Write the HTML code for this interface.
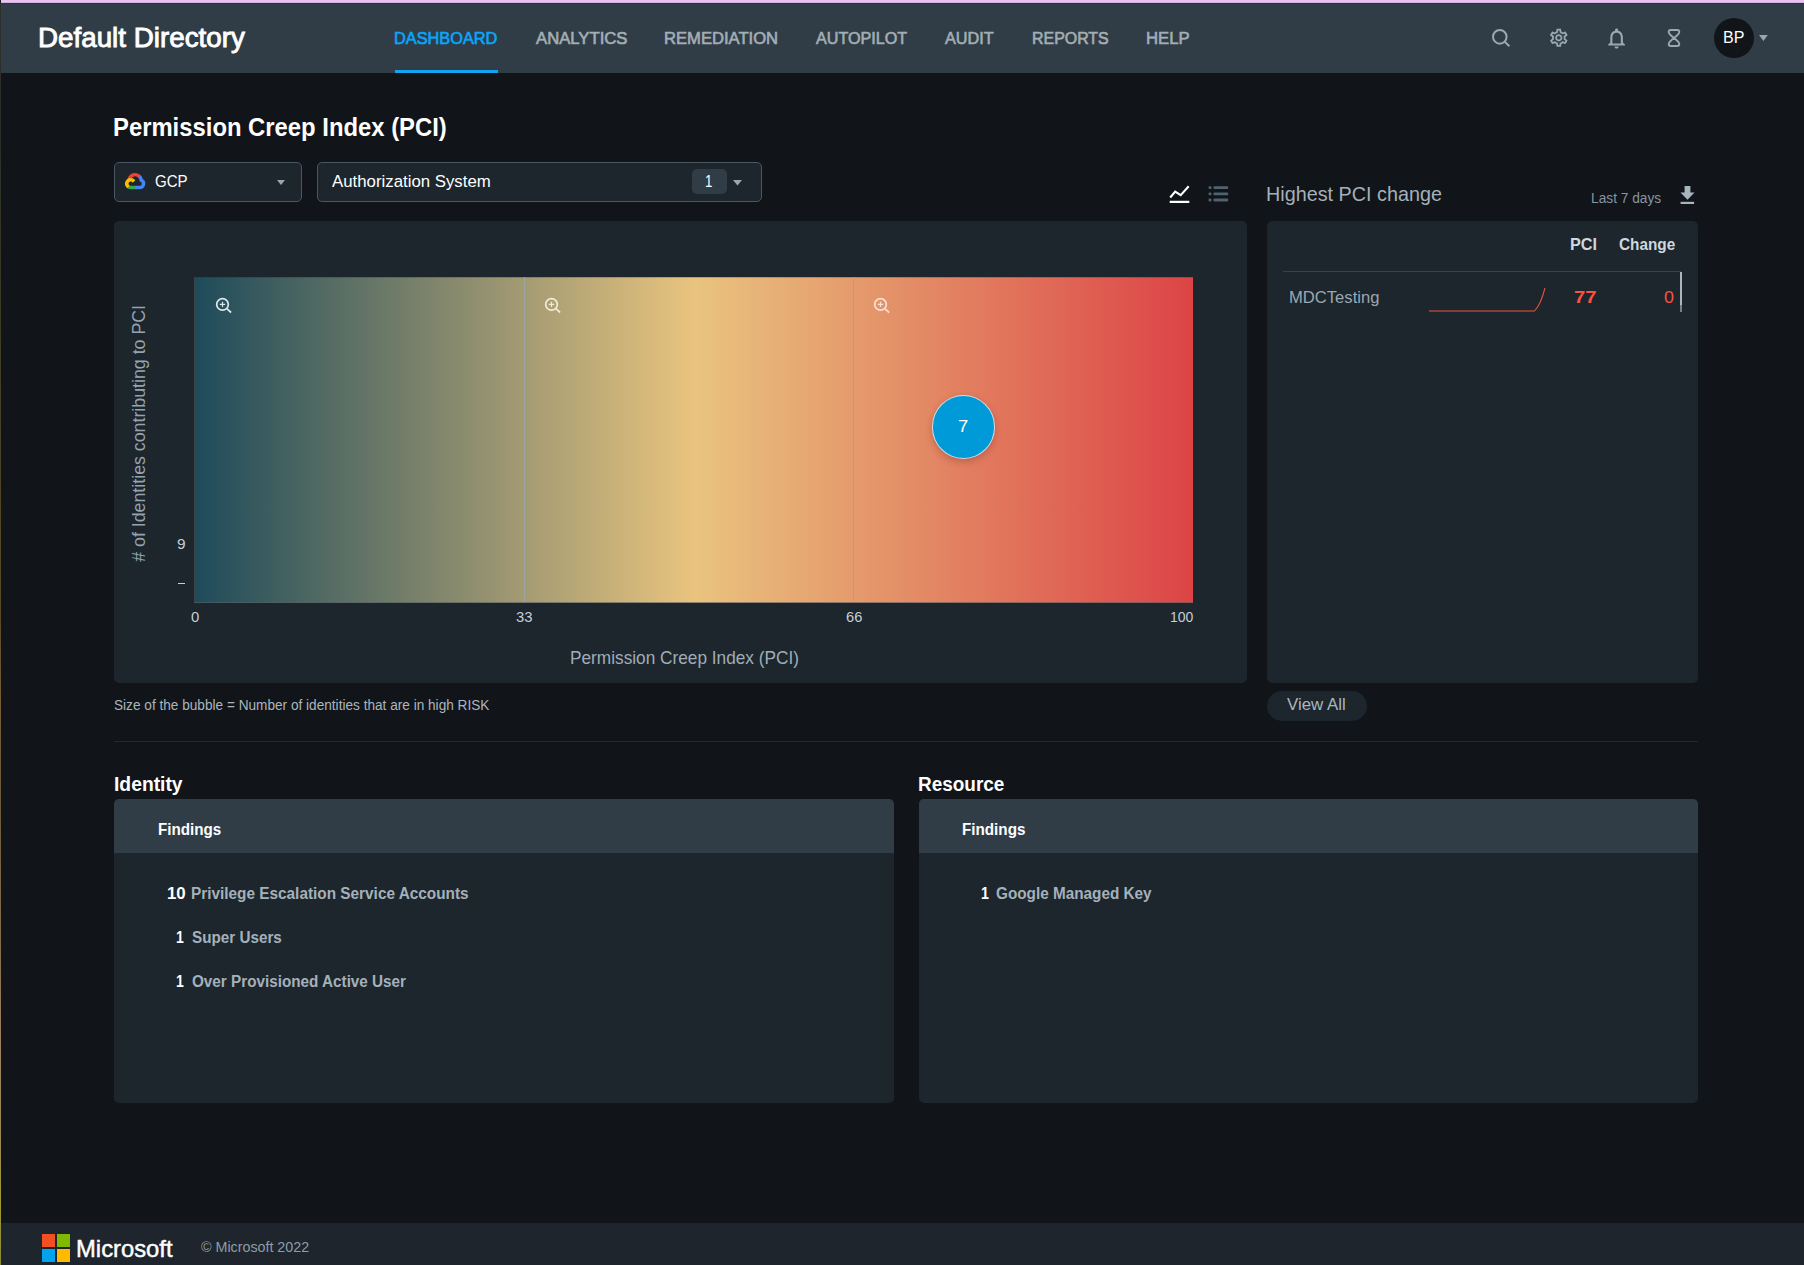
<!DOCTYPE html>
<html lang="en"><head><meta charset="utf-8"><title>Default Directory - Dashboard</title>
<style>
html,body{margin:0;padding:0}
body{width:1804px;height:1265px;overflow:hidden;position:relative;background:#111418;font-family:"Liberation Sans",sans-serif;}
.a{position:absolute;box-sizing:border-box}
.t{margin:0;padding:0;border:0;background:none;font-weight:400;font-style:normal;text-decoration:none;position:absolute;white-space:nowrap;line-height:1;transform-origin:0 0;font-family:"Liberation Sans",sans-serif;display:block}
.panel{background:#1d252d;border-radius:5px}
.sel{background:#1d252d;border:1px solid #485863;border-radius:5px}
.hdr{background:#303d47}
svg{position:absolute;overflow:visible}

</style></head>
<body>
<!-- window edge artefacts -->
<div class="a" style="left:0;top:0;width:1px;height:1265px;background:linear-gradient(#1a1c18 0,#1a1c18 3px,#302e2c 3px,#2c2d28 120px,#3a3a24 300px,#4a4424 450px,#5a4a28 620px,#7a5c34 700px,#6a5a3c 800px,#8a6c50 950px,#a08060 1050px,#9a8a4c 1150px,#a09a30 1200px,#8a8a34 1265px)"></div>
<div class="a" style="left:1px;top:0;width:1803px;height:3px;background:linear-gradient(#e9c4f0 0,#e9c4f0 2px,#d3b0db 2px,#d3b0db 3px)"></div>

<!-- header -->
<div class="a hdr" style="left:1px;top:3px;width:1803px;height:70px;border-top:1px solid #28363f"></div>
<div class="a" style="left:395px;top:70px;width:103px;height:3px;background:#10a4f5"></div>

<!-- header icons -->
<svg style="left:1486px;top:24px" width="30" height="28" viewBox="0 0 30 28" fill="none" stroke="#9aa8b1" stroke-width="2"><circle cx="13.8" cy="12.85" r="6.8"/><path d="M18.5 17.55L23.4 22.3"/></svg>
<svg style="left:1548.2px;top:27.2px" width="21.6" height="21.6" viewBox="0 0 24 24" fill="#9aa8b1"><path d="M19.43 12.980c.040-.320.070-.640.070-.980 0-.340-.030-.660-.070-.980l2.110-1.650c.190-.150.240-.420.120-.640l-2-3.460c-.090-.160-.260-.250-.440-.250-.060 0-.120.010-.170.030l-2.490 1c-.520-.400-1.080-.730-1.690-.980l-.380-2.650C14.460 2.180 14.250 2 14 2h-4c-.250 0-.460.180-.490.420l-.380 2.650c-.610.250-1.170.590-1.690.980l-2.490-1c-.060-.020-.120-.030-.180-.030-.170 0-.340.090-.430.250l-2 3.460c-.130.220-.070.490.120.640l2.110 1.650c-.040.320-.070.650-.070.980 0 .330.030.660.070.980l-2.110 1.650c-.190.150-.240.420-.120.640l2 3.460c.090.160.260.250.440.250.060 0 .120-.010.170-.030l2.490-1c.520.400 1.080.730 1.690.980l.380 2.650c.030.240.240.420.490.420h4c.250 0 .460-.180.490-.420l.380-2.650c.610-.250 1.170-.590 1.690-.980l2.490 1c.060.020.120.030.180.030.170 0 .340-.090.430-.250l2-3.460c.120-.220.070-.490-.120-.640l-2.110-1.650zm-1.980-1.710c.040.310.050.520.050.730 0 .210-.020.430-.050.730l-.140 1.130.890.700 1.080.840-.700 1.210-1.270-.510-1.040-.420-.900.680c-.430.320-.840.560-1.250.730l-1.060.430-.160 1.130-.200 1.350h-1.400l-.190-1.350-.160-1.130-1.060-.430c-.430-.180-.830-.410-1.230-.710l-.910-.700-1.060.430-1.270.510-.700-1.210 1.080-.840.890-.700-.140-1.130c-.030-.310-.050-.540-.050-.740s.020-.430.050-.730l.140-1.130-.890-.700-1.080-.840.700-1.210 1.270.510 1.040.420.900-.680c.430-.320.840-.560 1.250-.730l1.060-.430.160-1.130.200-1.350h1.390l.190 1.350.160 1.130 1.060.430c.430.180.830.410 1.230.710l.910.700 1.060-.430 1.270-.510.700 1.210-1.070.850-.890.700.140 1.130zM12 8c-2.210 0-4 1.790-4 4s1.790 4 4 4 4-1.790 4-4-1.790-4-4-4zm0 6c-1.100 0-2-.900-2-2s.900-2 2-2 2 .900 2 2-.900 2-2 2z"/></svg>
<svg style="left:1603.9px;top:26.2px" width="25.2" height="24.600" viewBox="0 0 24 24" fill="#9aa8b1" preserveAspectRatio="none"><path d="M12 22c1.100 0 2-.900 2-2h-4c0 1.100.900 2 2 2zm6-6v-5c0-3.070-1.630-5.640-4.500-6.320V4c0-.830-.670-1.500-1.500-1.500s-1.500.670-1.500 1.500v.680C7.640 5.360 6 7.920 6 11v5l-2 2v1h16v-1l-2-2zm-2 1H8v-6c0-2.480 1.510-4.500 4-4.500s4 2.020 4 4.500v6z"/></svg>
<svg style="left:1664px;top:28px" width="20" height="20" viewBox="-10 -10 20 20" fill="none" stroke="#9aa8b1" stroke-width="1.900"><path d="M-3.300-8H3.300Q5.300-8 5.300-6C5.300-1.900-5.300 1.900-5.300 6Q-5.300 8-3.300 8H3.300Q5.300 8 5.300 6C5.300 1.900-5.300-1.900-5.300-6Q-5.300-8-3.300-8Z"/></svg>
<div class="a" style="left:1714px;top:18px;width:40px;height:40px;border-radius:50%;background:#11151a"></div>
<svg style="left:1759.400px;top:35.100px" width="8.800" height="6" viewBox="0 0 9 6"><path d="M0 0h9L4.500 6z" fill="#98a6af"/></svg>

<!-- selectors -->
<div class="a sel" style="left:114px;top:162px;width:188px;height:40px"></div>
<svg style="left:125px;top:172.700px" width="20.300" height="16.400" viewBox="0 0 41 33">
  <path d="M26 9.100l1.300.020 3.600-3.600.170-1.500A16.100 16.100 0 0 0 4.800 11.900c.390-.270 1.230-.070 1.230-.070l7.100-1.170s.370-.600.550-.570A8.900 8.900 0 0 1 26 9.100z" fill="#ea4335"/>
  <path d="M36 11.900a16.100 16.100 0 0 0-4.850-7.800l-5 5a8.900 8.900 0 0 1 3.260 7v.890a4.450 4.450 0 1 1 0 8.900h-8.900l-.890.900v5.340l.890.890h8.900A11.570 11.570 0 0 0 36 11.900z" fill="#4285f4"/>
  <path d="M11.600 33h8.900v-7.120h-8.900a4.400 4.400 0 0 1-1.830-.400l-1.250.390-3.590 3.580-.310 1.250A11.510 11.510 0 0 0 11.600 33z" fill="#34a853"/>
  <path d="M11.600 9.900A11.570 11.570 0 0 0 4.620 30.700l5.160-5.160a4.450 4.450 0 1 1 5.890-5.890l5.160-5.160A11.560 11.560 0 0 0 11.600 9.900z" fill="#fbbc05"/>
</svg>
<svg style="left:277.200px;top:180px" width="8" height="5" viewBox="0 0 8 5"><path d="M0 0h8L4 5z" fill="#98a6af"/></svg>
<div class="a sel" style="left:317px;top:162px;width:445px;height:40px"></div>
<div class="a" style="left:692px;top:169px;width:35px;height:25px;border-radius:5px;background:#303d47"></div>
<svg style="left:732.500px;top:180px" width="9" height="5.500" viewBox="0 0 9 5.500"><path d="M0 0h9L4.500 5.500z" fill="#98a6af"/></svg>

<!-- chart-type toggles -->
<svg style="left:1168px;top:183px" width="24" height="22" viewBox="0 0 24 22" fill="none" stroke="#ffffff" stroke-width="2.100"><path d="M2.200 14.500L7.200 8.600 12.700 12.100 20.700 3.300" stroke-linejoin="miter"/><path d="M1.700 18.900h19.600" stroke-width="2.250"/></svg>
<svg style="left:1208px;top:185px" width="21" height="17" viewBox="0 0 21 17" fill="#4f6270"><rect x="0.500" y="1.200" width="3" height="2.800" rx="1"/><rect x="5.500" y="1.200" width="14.700" height="2.800" rx=".8"/><rect x="0.500" y="7.400" width="3" height="2.800" rx="1"/><rect x="5.500" y="7.400" width="14.700" height="2.800" rx=".8"/><rect x="0.500" y="13.600" width="3" height="2.800" rx="1"/><rect x="5.500" y="13.600" width="14.700" height="2.800" rx=".8"/></svg>

<!-- chart panel -->
<div class="a panel" style="left:114px;top:221px;width:1133px;height:462px"></div>
<div class="a" style="left:195px;top:277px;width:998px;height:326px;background:linear-gradient(90deg,#1e4b5a 0%,#e9c47f 50%,#dc4446 100%)"></div>
<div class="a" style="left:194px;top:277px;width:1px;height:326px;background:#3b4549"></div>
<div class="a" style="left:194px;top:602px;width:999px;height:1px;background:rgba(88,96,98,.62)"></div>
<div class="a" style="left:195px;top:277px;width:998px;height:1px;background:rgba(29,37,45,.22)"></div>
<div class="a" style="left:524px;top:277px;width:1px;height:325px;background:#99a4a9"></div>
<div class="a" style="left:853px;top:277px;width:1px;height:325px;background:#9ba5ab"></div>
<div class="a" style="left:178px;top:583px;width:7px;height:1.400px;background:#c5d0d8"></div>
<svg style="left:214px;top:296px" width="20" height="20" viewBox="0 0 20 20" fill="none" stroke="#dce8ee" stroke-width="1.700"><circle cx="8.500" cy="8.400" r="5.800"/><path d="M12.800 12.700L17.100 16.500" stroke-linecap="butt"/><path d="M8.500 5.700v5.400M5.800 8.400h5.400" stroke-width="1.200"/></svg>
<svg style="left:543px;top:296px" width="20" height="20" viewBox="0 0 20 20" fill="none" stroke="#f3ead8" stroke-width="1.700"><circle cx="8.500" cy="8.400" r="5.800"/><path d="M12.800 12.700L17.100 16.500" stroke-linecap="butt"/><path d="M8.500 5.700v5.400M5.800 8.400h5.400" stroke-width="1.200"/></svg>
<svg style="left:872px;top:296px" width="20" height="20" viewBox="0 0 20 20" fill="none" stroke="#f6e3d6" stroke-width="1.700"><circle cx="8.500" cy="8.400" r="5.800"/><path d="M12.800 12.700L17.100 16.500" stroke-linecap="butt"/><path d="M8.500 5.700v5.400M5.800 8.400h5.400" stroke-width="1.200"/></svg>
<div class="a" style="left:931.500px;top:395px;width:63.500px;height:63.500px;border-radius:50%;background:#009ad9;border:1px solid rgba(228,228,228,.9);box-shadow:0 3px 7px rgba(90,30,20,.28)"></div>
<span class="t" id="ylab" style="left:0;top:0;font-size:18.300px;color:#94a3ad;transform-origin:0 0;transform:translate(129.800px,561.800px) rotate(-90deg) scaleX(0.972)"># of Identities contributing to PCI</span>

<!-- right panel -->
<svg style="left:1680px;top:185px" width="15" height="20" viewBox="0 0 15 20" fill="#a8b5bd"><path d="M4.600 1h5.800v6.600h4.100L7.500 14.700.500 7.600h4.100z"/><rect x=".600" y="16.800" width="13.500" height="2.200"/></svg>
<div class="a panel" style="left:1267px;top:221px;width:431px;height:462px"></div>
<div class="a" style="left:1283px;top:271px;width:397.500px;height:1px;background:#34444f"></div>
<div class="a" style="left:1680.300px;top:272px;width:1.700px;height:40px;background:linear-gradient(#aab5bd 0,#aab5bd 33px,#75828b 33px,#75828b 40px)"></div>
<svg style="left:1420px;top:280px" width="140" height="40" viewBox="0 0 140 40" fill="none" stroke="#f0523f" stroke-width="1.100"><path d="M9 31H114.500Q121 24 125 7.800"/></svg>
<div class="a" style="left:1267px;top:691px;width:100px;height:30px;border-radius:15px;background:#1d252d"></div>
<div class="a" style="left:114px;top:741px;width:1584px;height:1px;background:#222a31"></div>

<!-- cards -->
<div class="a" style="left:114px;top:799px;width:780px;height:303.500px;border-radius:5px;background:#1d252d;overflow:hidden"><div class="hdr" style="height:53.600px"></div></div>
<div class="a" style="left:919px;top:799px;width:779px;height:303.500px;border-radius:5px;background:#1d252d;overflow:hidden"><div class="hdr" style="height:53.600px"></div></div>

<!-- footer -->
<div class="a" style="left:1px;top:1222.800px;width:1803px;height:43px;background:#1e252d"></div>
<div class="a" style="left:41.600px;top:1234.200px;width:13.300px;height:13.300px;background:#f25022"></div>
<div class="a" style="left:56.500px;top:1234.200px;width:13.400px;height:13.300px;background:#7fba00"></div>
<div class="a" style="left:41.600px;top:1248.800px;width:13.300px;height:13.200px;background:#00a4ef"></div>
<div class="a" style="left:56.500px;top:1248.800px;width:13.400px;height:13.200px;background:#ffb900"></div>

<!-- text layer -->
<header class="site-header">
  <div class="t" id="t_dd" style="left:38px;top:24px;font-size:28.02px;color:#ffffff;-webkit-text-stroke:0.9px #ffffff;transform:scaleX(0.9915);">Default Directory</div>
</header>
<nav class="main-nav">
  <a class="t" id="t_n1" style="left:394px;top:30px;font-size:17.35px;color:#0aa6fa;-webkit-text-stroke:0.65px #0aa6fa;transform:scaleX(0.9413);">DASHBOARD</a>
  <a class="t" id="t_n2" style="left:536px;top:30px;font-size:17.35px;color:#a3aeb4;-webkit-text-stroke:0.65px #a3aeb4;transform:scaleX(0.9619);">ANALYTICS</a>
  <a class="t" id="t_n3" style="left:664px;top:30px;font-size:17.35px;color:#a3aeb4;-webkit-text-stroke:0.65px #a3aeb4;transform:scaleX(0.9576);">REMEDIATION</a>
  <a class="t" id="t_n4" style="left:816px;top:30px;font-size:17.35px;color:#a3aeb4;-webkit-text-stroke:0.65px #a3aeb4;transform:scaleX(0.9309);">AUTOPILOT</a>
  <a class="t" id="t_n5" style="left:945px;top:30px;font-size:17.35px;color:#a3aeb4;-webkit-text-stroke:0.65px #a3aeb4;transform:scaleX(0.9370);">AUDIT</a>
  <a class="t" id="t_n6" style="left:1032px;top:30px;font-size:17.35px;color:#a3aeb4;-webkit-text-stroke:0.65px #a3aeb4;transform:scaleX(0.9184);">REPORTS</a>
  <a class="t" id="t_n7" style="left:1146px;top:30px;font-size:17.35px;color:#a3aeb4;-webkit-text-stroke:0.65px #a3aeb4;transform:scaleX(0.9622);">HELP</a>
</nav>
<div class="user-menu">
  <span class="t" id="t_bp" style="left:1723px;top:29px;font-size:17.38px;color:#ffffff;transform:scaleX(0.9247);">BP</span>
</div>
<section class="pci-chart">
  <h1 class="t" id="t_h1" style="left:113px;top:114px;font-size:26.31px;color:#ffffff;font-weight:700;transform:scaleX(0.9064);">Permission Creep Index (PCI)</h1>
  <span class="t" id="t_gcp" style="left:155px;top:173px;font-size:17.38px;color:#ffffff;transform:scaleX(0.8686);">GCP</span>
  <span class="t" id="t_as" style="left:332px;top:173px;font-size:17.38px;color:#ffffff;transform:scaleX(0.9679);">Authorization System</span>
  <span class="t" id="t_as1" style="left:705px;top:173px;font-size:17.38px;color:#ffffff;transform:scaleX(0.7640);">1</span>
  <span class="t" id="t_y9" style="left:177px;top:537px;font-size:14.53px;color:#c5d0d8;transform:scaleX(1.0589);">9</span>
  <span class="t" id="t_x0" style="left:191px;top:609px;font-size:15.00px;color:#c5d0d8;transform:scaleX(0.9931);">0</span>
  <span class="t" id="t_x33" style="left:516px;top:609px;font-size:15.00px;color:#c5d0d8;transform:scaleX(0.9896);">33</span>
  <span class="t" id="t_x66" style="left:846px;top:609px;font-size:15.00px;color:#c5d0d8;transform:scaleX(0.9765);">66</span>
  <span class="t" id="t_x100" style="left:1170px;top:609px;font-size:15.00px;color:#c5d0d8;transform:scaleX(0.9320);">100</span>
  <span class="t" id="t_b7" style="left:958px;top:419px;font-size:16.86px;color:#ffffff;transform:scaleX(1.0966);">7</span>
  <span class="t" id="t_xt" style="left:570px;top:649px;font-size:18.17px;color:#a0adb6;transform:scaleX(0.9495);">Permission Creep Index (PCI)</span>
  <span class="t" id="t_cap" style="left:114px;top:698px;font-size:14.53px;color:#aab6be;transform:scaleX(0.9389);">Size of the bubble = Number of identities that are in high RISK</span>
</section>
<aside class="pci-change">
  <h2 class="t" id="t_hp" style="left:1266px;top:184px;font-size:20.57px;color:#a4b1ba;transform:scaleX(0.9618);">Highest PCI change</h2>
  <span class="t" id="t_l7" style="left:1591px;top:191px;font-size:14.53px;color:#8696a0;transform:scaleX(0.9454);">Last 7 days</span>
  <span class="t" id="t_pci" style="left:1570px;top:236px;font-size:17.01px;color:#cfd8de;font-weight:700;transform:scaleX(0.9555);">PCI</span>
  <span class="t" id="t_chg" style="left:1619px;top:236px;font-size:17.01px;color:#cfd8de;font-weight:700;transform:scaleX(0.9025);">Change</span>
  <span class="t" id="t_mdc" style="left:1289px;top:289px;font-size:17.23px;color:#9aa8b2;transform:scaleX(0.9640);">MDCTesting</span>
  <span class="t" id="t_v77" style="left:1574px;top:289px;font-size:17.23px;color:#f9543f;font-weight:700;transform:scaleX(1.1794);">77</span>
  <span class="t" id="t_v0" style="left:1664px;top:289px;font-size:17.23px;color:#f9543f;transform:scaleX(1.0348);">0</span>
  <button class="t" id="t_va" style="left:1287px;top:696px;font-size:17.23px;color:#aab6be;transform:scaleX(0.9784);">View All</button>
</aside>
<section class="identity">
  <h2 class="t" id="t_id" style="left:114px;top:774px;font-size:20.93px;color:#ffffff;font-weight:700;transform:scaleX(0.9222);">Identity</h2>
  <h3 class="t" id="t_f1" style="left:158px;top:821px;font-size:17.23px;color:#ffffff;font-weight:700;transform:scaleX(0.8818);">Findings</h3>
  <span class="t" id="t_r1n" style="left:167px;top:885px;font-size:17.23px;color:#ffffff;font-weight:700;transform:scaleX(0.9780);">10</span>
  <span class="t" id="t_r1" style="left:191px;top:885px;font-size:17.23px;color:#a4b1ba;font-weight:700;transform:scaleX(0.8916);">Privilege Escalation Service Accounts</span>
  <span class="t" id="t_r2n" style="left:176px;top:929px;font-size:17.37px;color:#ffffff;font-weight:700;transform:scaleX(0.8093);">1</span>
  <span class="t" id="t_r2" style="left:192px;top:929px;font-size:17.37px;color:#a4b1ba;font-weight:700;transform:scaleX(0.8779);">Super Users</span>
  <span class="t" id="t_r3n" style="left:176px;top:973px;font-size:17.37px;color:#ffffff;font-weight:700;transform:scaleX(0.8093);">1</span>
  <span class="t" id="t_r3" style="left:192px;top:973px;font-size:17.37px;color:#a4b1ba;font-weight:700;transform:scaleX(0.8791);">Over Provisioned Active User</span>
</section>
<section class="resource">
  <h2 class="t" id="t_rs" style="left:918px;top:774px;font-size:20.93px;color:#ffffff;font-weight:700;transform:scaleX(0.9058);">Resource</h2>
  <h3 class="t" id="t_f2" style="left:962px;top:821px;font-size:17.23px;color:#ffffff;font-weight:700;transform:scaleX(0.8839);">Findings</h3>
  <span class="t" id="t_g1n" style="left:981px;top:885px;font-size:17.23px;color:#ffffff;font-weight:700;transform:scaleX(0.8293);">1</span>
  <span class="t" id="t_g1" style="left:996px;top:885px;font-size:17.23px;color:#a4b1ba;font-weight:700;transform:scaleX(0.8889);">Google Managed Key</span>
</section>
<footer class="site-footer">
  <strong class="t" id="t_ms" style="left:76px;top:1238px;font-size:23.03px;color:#ffffff;-webkit-text-stroke:0.45px #ffffff;transform:scaleX(1.0346);">Microsoft</strong>
  <span class="t" id="t_cr" style="left:201px;top:1240px;font-size:14.53px;color:#8e9ca6;transform:scaleX(0.9836);">© Microsoft 2022</span>
</footer>
</body></html>
